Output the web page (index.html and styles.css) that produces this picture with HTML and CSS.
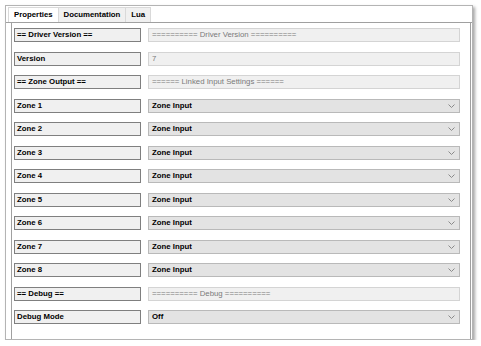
FILE: index.html
```html
<!DOCTYPE html>
<html lang="en">
<head>
  <meta charset="UTF-8" />
  <title>Driver Properties</title>
  <link rel="stylesheet" href="styles.css">
</head>
<body>
  <div class="window">
    <div class="tabs">
      <div class="tab active">Properties</div>
      <div class="tab">Documentation</div>
      <div class="tab">Lua</div>
    </div>

    <div class="panel">
      <div class="grid">
        <div class="label">== Driver Version ==</div>
        <div class="field readonly">========== Driver Version ==========</div>

        <div class="label">Version</div>
        <div class="field readonly">7</div>

        <div class="label">== Zone Output ==</div>
        <div class="field readonly">====== Linked Input Settings ======</div>

        <div class="label">Zone 1</div>
        <div class="field select">Zone Input <svg class="chev" width="7" height="4" viewBox="0 0 7 4"><path d="M0.5 0.5 L3.5 3.5 L6.5 0.5" /></svg></div>

        <div class="label">Zone 2</div>
        <div class="field select">Zone Input <svg class="chev" width="7" height="4" viewBox="0 0 7 4"><path d="M0.5 0.5 L3.5 3.5 L6.5 0.5" /></svg></div>

        <div class="label">Zone 3</div>
        <div class="field select">Zone Input <svg class="chev" width="7" height="4" viewBox="0 0 7 4"><path d="M0.5 0.5 L3.5 3.5 L6.5 0.5" /></svg></div>

        <div class="label">Zone 4</div>
        <div class="field select">Zone Input <svg class="chev" width="7" height="4" viewBox="0 0 7 4"><path d="M0.5 0.5 L3.5 3.5 L6.5 0.5" /></svg></div>

        <div class="label">Zone 5</div>
        <div class="field select">Zone Input <svg class="chev" width="7" height="4" viewBox="0 0 7 4"><path d="M0.5 0.5 L3.5 3.5 L6.5 0.5" /></svg></div>

        <div class="label">Zone 6</div>
        <div class="field select">Zone Input <svg class="chev" width="7" height="4" viewBox="0 0 7 4"><path d="M0.5 0.5 L3.5 3.5 L6.5 0.5" /></svg></div>

        <div class="label">Zone 7</div>
        <div class="field select">Zone Input <svg class="chev" width="7" height="4" viewBox="0 0 7 4"><path d="M0.5 0.5 L3.5 3.5 L6.5 0.5" /></svg></div>

        <div class="label">Zone 8</div>
        <div class="field select">Zone Input <svg class="chev" width="7" height="4" viewBox="0 0 7 4"><path d="M0.5 0.5 L3.5 3.5 L6.5 0.5" /></svg></div>

        <div class="label">== Debug ==</div>
        <div class="field readonly">========== Debug ==========</div>

        <div class="label">Debug Mode</div>
        <div class="field select">Off <svg class="chev" width="7" height="4" viewBox="0 0 7 4"><path d="M0.5 0.5 L3.5 3.5 L6.5 0.5" /></svg></div>
      </div>
    </div>
  </div>
</body>
</html>
```

FILE: styles.css
```css
* {
  box-sizing: border-box;
  margin: 0;
  padding: 0;
}

body {
  background: #ffffff;
  font-family: "Liberation Sans", Arial, sans-serif;
  font-size: 7.8px;
  color: #000;
}

.window {
  margin: 5px 0 0 5px;
  width: 468px;
  height: 335px;
  border: 1px solid #b4b4b4;
  background: #fff;
  box-shadow: 2px 2px 3px rgba(0, 0, 0, 0.35);
  display: flex;
  flex-direction: column;
}

.tabs {
  display: flex;
  height: 17px;
  padding: 1px 0 0 2px;
  border-bottom: 1px solid #a0a0a0;
}

.tab {
  height: 15px;
  padding: 0 5px;
  line-height: 14px;
  font-weight: bold;
  border: 1px solid #d9d9d9;
  border-bottom: none;
  background: #f0f0f0;
}

.tab.active {
  background: #fff;
}

.tab + .tab {
  border-left: none;
}

.panel {
  flex: 1;
  margin: 0 1px 0 5px;
  border-left: 1px solid #a0a0a0;
  border-right: 1px solid #a0a0a0;
  padding: 5px 0 0 2px;
}

.grid {
  display: grid;
  grid-template-columns: 127px 312px;
  column-gap: 7px;
  row-gap: 9.5px;
}

.label {
  height: 14px;
  line-height: 12px;
  padding-left: 2px;
  font-weight: bold;
  background: #f0f0f0;
  border: 1px solid #7f7f7f;
}

.field {
  height: 14px;
  line-height: 12px;
  padding-left: 3px;
  border: 1px solid #d4d4d4;
  display: flex;
  justify-content: space-between;
  align-items: center;
}

.readonly {
  background: #f0f0f0;
  color: #7a7a7a;
}

.select {
  background: #e3e3e3;
  border-color: #b9b9b9;
  font-weight: bold;
}

.chev {
  margin-right: 4px;
  fill: none;
  stroke: #8a8a8a;
  stroke-width: 1;
}
```
